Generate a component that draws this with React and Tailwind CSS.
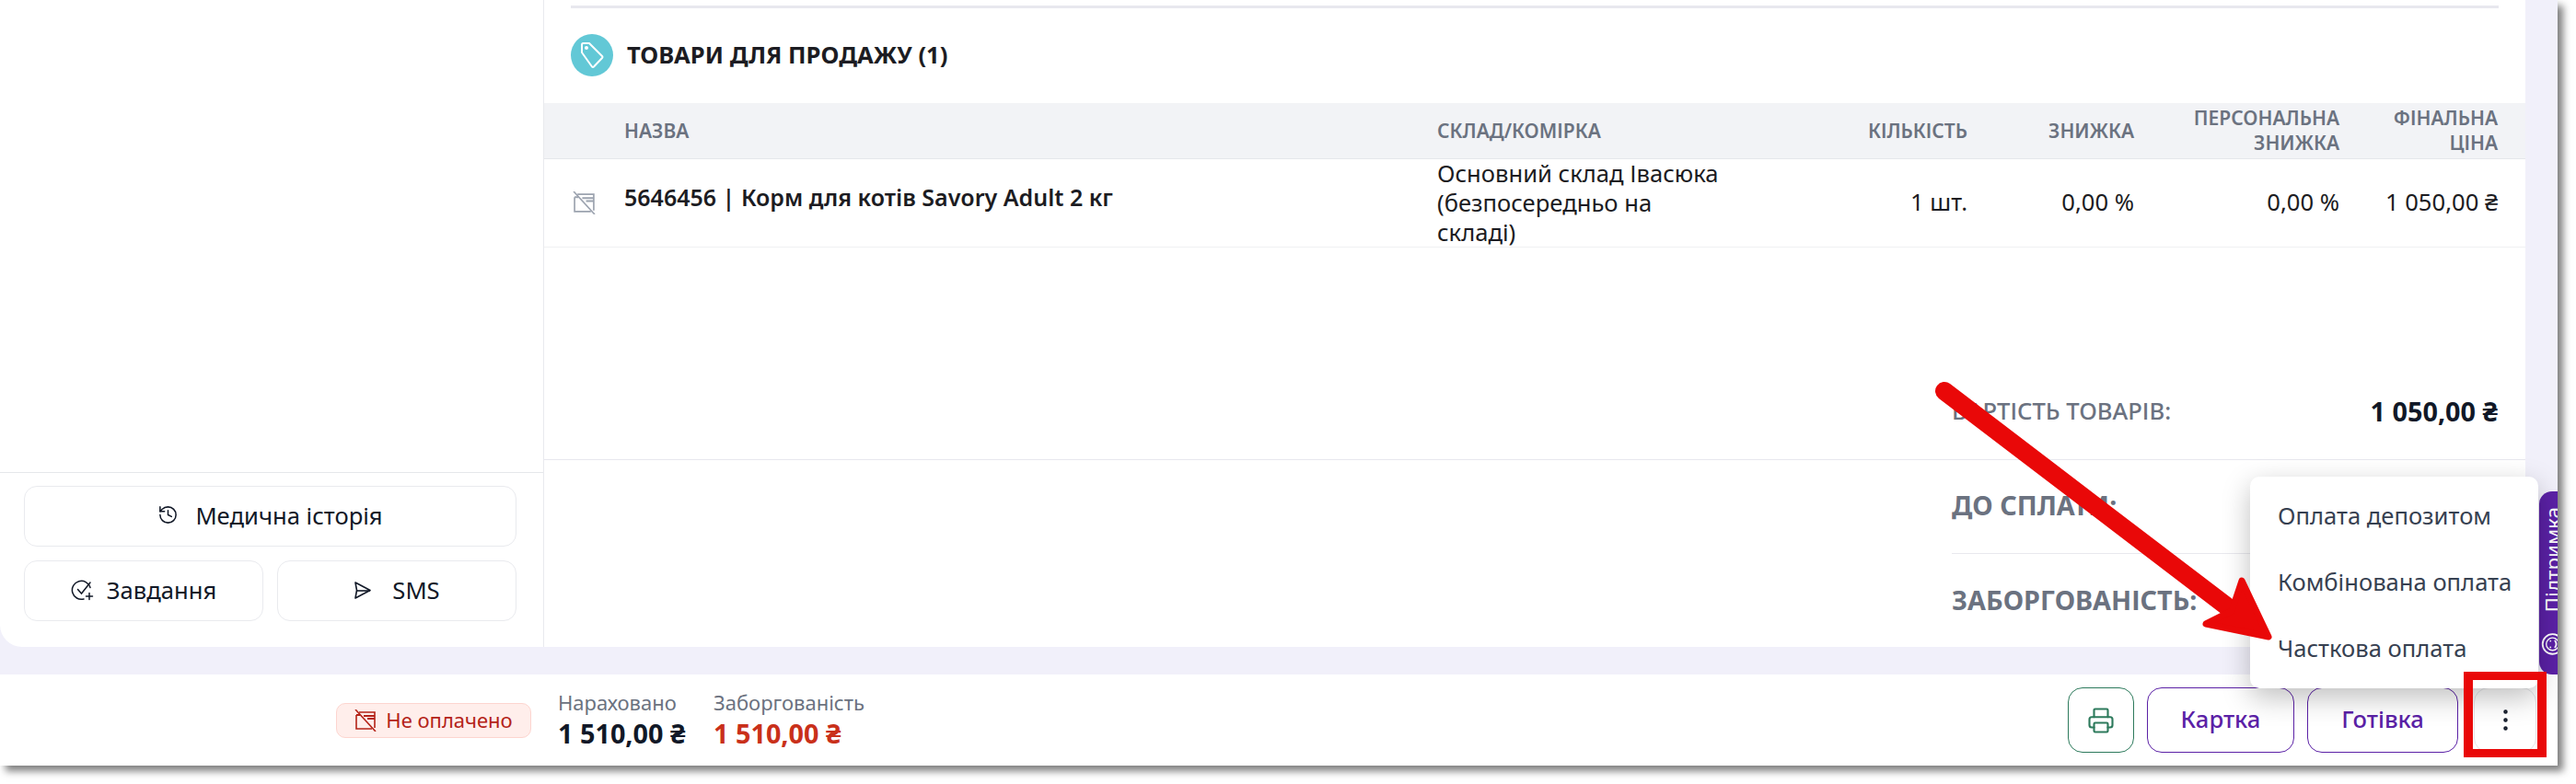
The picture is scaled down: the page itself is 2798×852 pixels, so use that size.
import { History, Printer, EllipsisVertical } from "lucide-react";

// Перекреслена картка: значок статусу оплати
function NoCardIcon({ size = 24, className = "" }) {
  return (
    <svg width={size} height={size} viewBox="0 0 24 24" fill="none" stroke="currentColor" strokeWidth="1.6" className={className}>
      <path d="M5 3h17v17" />
      <path d="M2 6v15h17" />
      <path d="M2 6h4M10 7h12M14 10h8" strokeWidth="2" />
      <path d="M1 0l22 24" />
    </svg>
  );
}

function TagIcon() {
  return (
    <svg width="26" height="30" viewBox="0 0 26 30" fill="none" stroke="white" strokeWidth="2" strokeLinejoin="round">
      <path d="M2 3.5 a1.5 1.5 0 0 1 1.5-1.5 H10 L24 16 a1.5 1.5 0 0 1 0 2 L15 27.5 a1.5 1.5 0 0 1-2 0 L2 12 Z" />
      <circle cx="7" cy="7" r="1" fill="white" />
    </svg>
  );
}

function TaskIcon() {
  return (
    <svg width="26" height="26" viewBox="0 0 26 26" fill="none" stroke="currentColor" strokeWidth="1.5" strokeLinecap="round">
      <path d="M21 9.5 A10 10 0 1 0 14 22" />
      <path d="M7.5 11.5l4 4.5L21 4" />
      <path d="M20 15.5v7M16.5 19h7" />
    </svg>
  );
}

function SendIcon() {
  return (
    <svg width="20" height="22" viewBox="0 0 20 22" fill="none" stroke="currentColor" strokeWidth="1.6" strokeLinejoin="round">
      <path d="M2 2l16 8.5L2 19l1.5-8.5L2 2z" />
      <path d="M3.5 11H18" />
    </svg>
  );
}

function SupportIcon() {
  return (
    <svg width="25" height="25" viewBox="0 0 22 22" fill="none" stroke="white" strokeWidth="1.6" strokeLinecap="round" className="rotate-90">
      <circle cx="11" cy="11" r="9.5" />
      <circle cx="11" cy="11" r="6" strokeWidth="1.2" />
      <path d="M8 9h.01M14 9h.01M8 13.5c1.8 1.3 4.2 1.3 6 0" />
    </svg>
  );
}

function Arrow() {
  return (
    <svg width="400" height="300" viewBox="2090 410 400 300" className="absolute left-[2090px] top-[410px] z-40 pointer-events-none">
      <line x1="2112" y1="425" x2="2428" y2="666" stroke="#e90808" strokeWidth="20" strokeLinecap="round" />
      <polygon points="2435,631 2464,692 2396,678 2424,664" fill="#e90808" stroke="#e90808" strokeWidth="7" strokeLinejoin="round" />
    </svg>
  );
}

const columns = [
  { label: "КІЛЬКІСТЬ", value: "1 шт.", width: "w-[220px]", labelWidth: "" },
  { label: "ЗНИЖКА", value: "0,00 %", width: "w-[181px]", labelWidth: "" },
  { label: "ПЕРСОНАЛЬНА ЗНИЖКА", value: "0,00 %", width: "w-[223px]", labelWidth: "w-[175px]" },
  { label: "ФІНАЛЬНА ЦІНА", value: "1 050,00 ₴", width: "w-[172px]", labelWidth: "w-[125px]" },
];

const menuItems = ["Оплата депозитом", "Комбінована оплата", "Часткова оплата"];

export default function App() {
  return (
    <div className="h-[852px] w-[2798px] bg-white overflow-hidden" style={{ fontFamily: '"Noto Sans", sans-serif' }}>
      <div className="relative flex h-[832px] w-[2778px] flex-col bg-[#f1f0fa] shadow-[6px_6px_8px_rgba(0,0,0,0.5)]">
        <div className="flex h-[733px] shrink-0 items-start">
          <div className="flex h-[703px] w-[2743px] overflow-hidden rounded-bl-[24px] bg-white">
            {/* Ліва колонка */}
            <aside className="flex h-full w-[590px] shrink-0 flex-col justify-end">
              <div className="flex flex-col gap-[15px] border-t border-[#e5e7eb] pl-[26px] pr-[29px] pt-[14px] pb-[28px] text-[#111827] text-[25.6px]">
                <button className="flex h-[66px] items-center justify-center gap-[18px] rounded-[14px] border border-[#e9eaee]">
                  <History size={23} strokeWidth={1.6} className="-mt-1" />
                  <span>Медична історія</span>
                </button>
                <div className="flex gap-[15px]">
                  <button className="flex h-[66px] w-[260px] items-center justify-center gap-[13px] rounded-[14px] border border-[#e9eaee]">
                    <TaskIcon />
                    <span>Завдання</span>
                  </button>
                  <button className="flex h-[66px] w-[260px] items-center justify-center gap-[22px] rounded-[14px] border border-[#e9eaee]">
                    <SendIcon />
                    <span>SMS</span>
                  </button>
                </div>
              </div>
            </aside>

            {/* Основна частина */}
            <main className="flex h-full flex-1 flex-col border-l border-[#e9eaee]">
              <div className="mx-[29px] mt-[6px] h-[3px] bg-[#e8e8ee]" />
              <div className="flex h-[103px] items-start gap-[15px] pl-[29px] pt-[28px]">
                <div className="flex h-[46px] w-[46px] items-center justify-center rounded-full bg-[#62c8d6]">
                  <TagIcon />
                </div>
                <h2 className="mt-[8px] text-[25.6px] font-bold leading-[30px] text-[#1c1c22]">ТОВАРИ ДЛЯ ПРОДАЖУ (1)</h2>
              </div>

              <div className="flex h-[61px] items-center border-b border-[#e5e7eb] bg-[#f2f3f6] pr-[30px] text-[21px] font-semibold leading-[27px] text-[#6b7280]">
                <div className="w-[970px] pl-[87px]">НАЗВА</div>
                <div className="w-[356px]">СКЛАД/КОМІРКА</div>
                {columns.map((c) => (
                  <div key={c.label} className={`${c.width} flex justify-end`}>
                    <span className={`${c.labelWidth} text-right`}>{c.label}</span>
                  </div>
                ))}
              </div>

              <div className="flex h-[96px] items-center border-b border-[#f0f1f3] pr-[30px] text-[25.6px] text-[#1c1c22]">
                <div className="flex w-[970px] items-center">
                  <NoCardIcon size={25} className="ml-[31px] mr-[31px] text-[#9ca3af]" />
                  <span className="text-[25px] font-semibold -mt-[12px]">5646456 | Корм для котів Savory Adult 2 кг</span>
                </div>
                <div className="w-[356px] shrink-0 leading-[32px]">
                  <div className="w-[320px]">Основний склад Івасюка (безпосередньо на складі)</div>
                </div>
                {columns.map((c) => (
                  <div key={c.value + c.label} className={`${c.width} text-right`}>{c.value}</div>
                ))}
              </div>

              <div className="flex h-[231px] items-end border-b border-[#e8e8ee] pb-[33px] pl-[1529px] pr-[30px]">
                <span className="text-[25.6px] font-medium text-[#6b7280]">ВАРТІСТЬ ТОВАРІВ:</span>
                <span className="ml-auto -mb-[2px] text-[28.8px] font-bold text-[#111827]">1 050,00 ₴</span>
              </div>
              <div className="ml-[1529px] flex h-[102px] items-center border-b border-[#e8e8ee] pb-[3px]">
                <span className="text-[28.8px] font-bold text-[#6b7280]">ДО СПЛАТИ:</span>
              </div>
              <div className="ml-[1529px] flex h-[100px] items-center">
                <span className="text-[28.8px] font-bold text-[#6b7280]">ЗАБОРГОВАНІСТЬ:</span>
              </div>
            </main>
          </div>
        </div>

        {/* Нижня панель */}
        <footer className="flex h-[99px] items-center bg-white pr-[23px]">
          <div className="ml-[365px] flex h-[38px] w-[212px] items-center justify-center gap-[10px] rounded-[10px] border border-[#fdd5cf] bg-[#ffeeeb] text-[22px] text-[#b42318]">
            <NoCardIcon size={24} />
            <span>Не оплачено</span>
          </div>
          <div className="ml-[29px] w-[169px]">
            <div className="-mt-[2px] text-[22px] leading-[26px] text-[#6b7280]">Нараховано</div>
            <div className="mt-[5px] text-[28.8px] font-bold leading-[32px] text-[#111827]">1 510,00 ₴</div>
          </div>
          <div>
            <div className="-mt-[2px] text-[22px] leading-[26px] text-[#6b7280]">Заборгованість</div>
            <div className="mt-[5px] text-[28.8px] font-bold leading-[32px] text-[#c9301a]">1 510,00 ₴</div>
          </div>
          <div className="ml-auto flex items-center">
            <button className="flex h-[71px] w-[72px] items-center justify-center rounded-[16px] border border-[#2d7a5c] text-[#2d7a5c]">
              <Printer size={30} strokeWidth={1.7} />
            </button>
            <button className="ml-[14px] h-[71px] w-[160px] rounded-[16px] border border-[#5b21a6] text-[25.6px] font-medium text-[#5b21a6]">Картка</button>
            <button className="ml-[14px] h-[71px] w-[164px] rounded-[16px] border border-[#5b21a6] text-[25.6px] font-medium text-[#5b21a6]">Готівка</button>
            <button className="ml-[17px] flex h-[71px] w-[68px] items-center justify-center rounded-[16px] border border-[#e5e7eb] text-[#111827]">
              <EllipsisVertical size={31} strokeWidth={1.5} />
            </button>
          </div>
        </footer>

        {/* Вкладка підтримки */}
        <div className="absolute left-[2758px] top-[534px] flex h-[199px] w-[20px] items-end overflow-hidden rounded-l-[14px] bg-[#5b21a6]">
          <div className="flex shrink-0 rotate-180 items-center gap-[22px] pt-[21px] text-[22.4px] leading-[30px] text-white [writing-mode:vertical-rl]">
            <SupportIcon />
            <span>Підтримка</span>
          </div>
        </div>

        {/* Меню додаткових способів оплати */}
        <div className="absolute left-[2444px] top-[518px] z-30 flex h-[230px] w-[313px] flex-col justify-center gap-[32px] rounded-[10px] bg-white pl-[30px] text-[25.6px] leading-[40px] text-[#374151] shadow-[0_10px_30px_rgba(0,0,0,0.25)]">
          {menuItems.map((item) => (
            <div key={item}>{item}</div>
          ))}
        </div>

        <Arrow />
        <div className="absolute left-[2676px] top-[730px] z-40 h-[93px] w-[90px] border-x-[10px] border-y-[9px] border-[#e90808]" />
      </div>
    </div>
  );
}
